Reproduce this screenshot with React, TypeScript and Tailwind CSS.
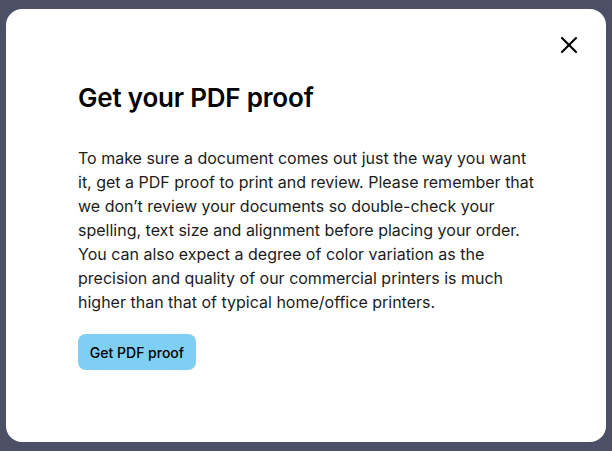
import { X } from "lucide-react";

const lines = [
  "To make sure a document comes out just the way you want",
  "it, get a PDF proof to print and review. Please remember that",
  "we don\u2019t review your documents so double-check your",
  "spelling, text size and alignment before placing your order.",
  "You can also expect a degree of color variation as the",
  "precision and quality of our commercial printers is much",
  "higher than that of typical home/office printers.",
];

export default function App() {
  return (
    <div
      className="w-[612px] h-[451px] bg-[#4b5066] pt-[9px] pl-[6px] overflow-hidden"
      style={{ fontFamily: "Inter, 'Liberation Sans', sans-serif" }}
    >
      <div className="relative w-[600px] h-[433px] bg-white rounded-[16px] pl-[72px] pt-[73px]">
        <button className="absolute top-[22px] right-[23px] text-black">
          <X size={28} strokeWidth={1.8} />
        </button>
        <h1 className="text-[26px] leading-[32px] font-semibold text-black tracking-[-0.2px]">
          Get your PDF proof
        </h1>
        <p className="mt-[32px] text-[16px] leading-[24px] text-[#1c1c1c] whitespace-nowrap">
          {lines.map((l) => (
            <span key={l} className="block">
              {l}
            </span>
          ))}
        </p>
        <button className="mt-[20px] h-[36px] w-[118px] rounded-[8px] bg-[#7fcff4] text-[14px] font-medium text-black">
          Get PDF proof
        </button>
      </div>
    </div>
  );
}
